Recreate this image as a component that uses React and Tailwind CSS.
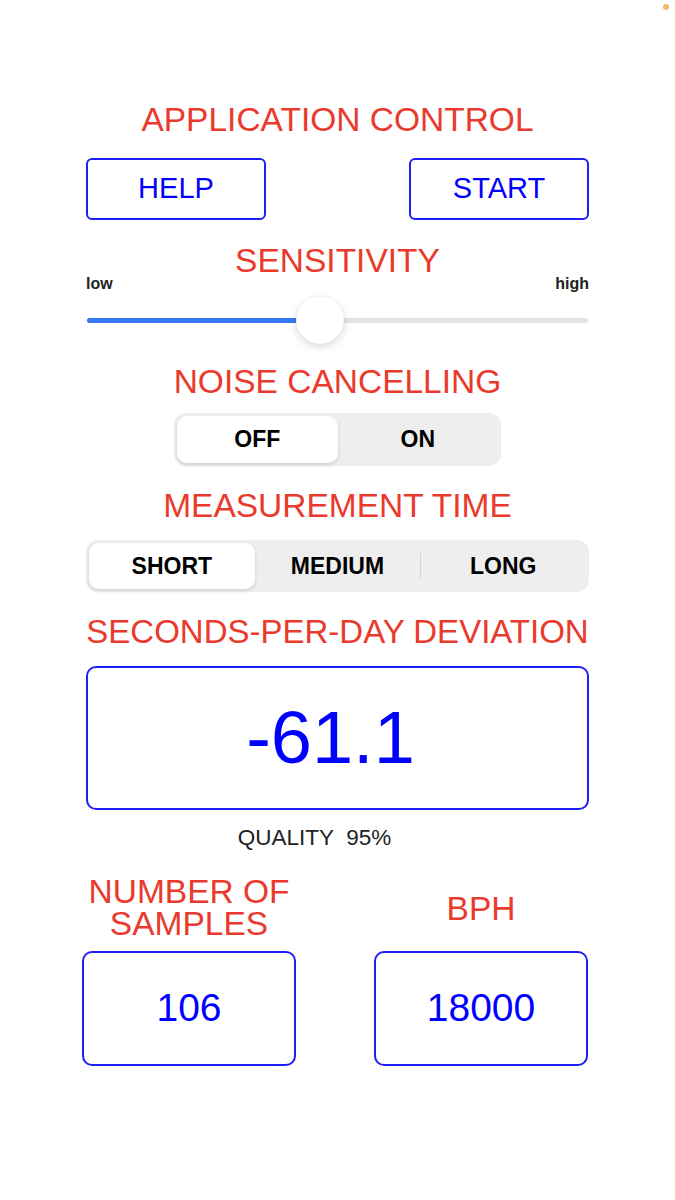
import { useState } from "react";

const RED = "text-[#ea3a2d]";

const Title = ({ children, className = "" }) => (
  <h2 className={`text-center text-[33.5px] leading-[33px] ${RED} ${className}`}>{children}</h2>
);

const Segmented = ({ options, value, onChange, className = "", divider }) => (
  <div className={`flex rounded-[12px] bg-[#eeeeef] p-[3px] ${className}`}>
    {options.map((opt, i) => {
      const active = opt === value;
      const showDivider = divider && i > 0 && options[i - 1] !== value && !active;
      return (
        <button
          key={opt}
          onClick={() => onChange(opt)}
          className={`relative flex flex-1 items-center justify-center rounded-[10px] text-[23px] font-bold text-black ${
            active ? "bg-white shadow-[0_2px_4px_rgba(0,0,0,0.12)]" : ""
          }`}
        >
          {showDivider && (
            <span className="absolute left-0 top-1/2 h-[26px] w-px -translate-y-1/2 bg-[#d4d4d8]" />
          )}
          {opt}
        </button>
      );
    })}
  </div>
);

export default function App() {
  const [noise, setNoise] = useState("OFF");
  const [time, setTime] = useState("SHORT");
  const sensitivity = 0.462;

  return (
    <div className="relative min-h-[1200px] bg-white font-['Liberation_Sans',Arial,sans-serif]">
      <span className="absolute right-[6px] top-[4px] h-[6px] w-[6px] rounded-full bg-[#f7b36a]" />

      <div className="flex flex-col px-[86px] pt-[103px]">
        <Title>APPLICATION CONTROL</Title>

        <div className="mt-[22px] flex justify-between">
          <button className="flex h-[62px] w-[180px] items-center justify-center rounded-[6px] border-2 border-[#1f1ff5] text-[29px] text-[#0000ff]">
            HELP
          </button>
          <button className="flex h-[62px] w-[180px] items-center justify-center rounded-[6px] border-2 border-[#1f1ff5] text-[29px] text-[#0000ff]">
            START
          </button>
        </div>

        <Title className="mt-[24px]">SENSITIVITY</Title>

        <div className="-mt-px flex justify-between text-[16px] font-bold leading-none text-[#222]">
          <span>low</span>
          <span>high</span>
        </div>

        {/* slider */}
        <div className="relative mt-[4px] flex h-[48px] items-center px-px">
          <div className="h-[5px] w-full rounded-full bg-[#e4e4e8]">
            <div
              className="h-full rounded-full bg-[#3478f6]"
              style={{ width: `${sensitivity * 100}%` }}
            />
          </div>
          <div className="absolute left-[210px] top-0 h-[48px] w-[48px] rounded-full bg-white shadow-[0_3px_8px_rgba(0,0,0,0.15),0_0_1px_rgba(0,0,0,0.12)]" />
        </div>

        <Title className="mt-[21px]">NOISE CANCELLING</Title>

        <Segmented
          options={["OFF", "ON"]}
          value={noise}
          onChange={setNoise}
          className="mx-auto mt-[15px] h-[53px] w-[327px]"
        />

        <Title className="mt-[23px]">MEASUREMENT TIME</Title>

        <Segmented
          options={["SHORT", "MEDIUM", "LONG"]}
          value={time}
          onChange={setTime}
          divider
          className="mt-[18px] h-[52px] w-full"
        />

        <Title className="mt-[23px] whitespace-nowrap !text-[33px]">SECONDS-PER-DAY DEVIATION</Title>

        <div className="mt-[18px] flex h-[144px] items-center justify-center rounded-[10px] border-2 border-[#1f1ff5] pr-[14px]">
          <span className="text-[74px] leading-none text-[#0000ff]">-61.1</span>
        </div>

        <p className="mt-[17px] whitespace-pre pr-[46px] text-center text-[22.5px] leading-[22px] text-[#222]">
          QUALITY  95%
        </p>

        <div className="-ml-[4px] mt-[27px] grid w-[506px] grid-cols-2 gap-x-[78px]">
          <div className="flex h-[64px] items-center justify-center">
            <h2 className={`text-center text-[33.5px] leading-[32px] ${RED}`}>
              NUMBER OF
              <br />
              SAMPLES
            </h2>
          </div>
          <div className="flex h-[64px] items-center justify-center">
            <Title>BPH</Title>
          </div>
          <div className="mt-[11px] flex h-[115px] items-center justify-center rounded-[10px] border-2 border-[#1f1ff5] text-[39px] text-[#0000ff]">
            106
          </div>
          <div className="mt-[11px] flex h-[115px] items-center justify-center rounded-[10px] border-2 border-[#1f1ff5] text-[39px] text-[#0000ff]">
            18000
          </div>
        </div>
      </div>
    </div>
  );
}
